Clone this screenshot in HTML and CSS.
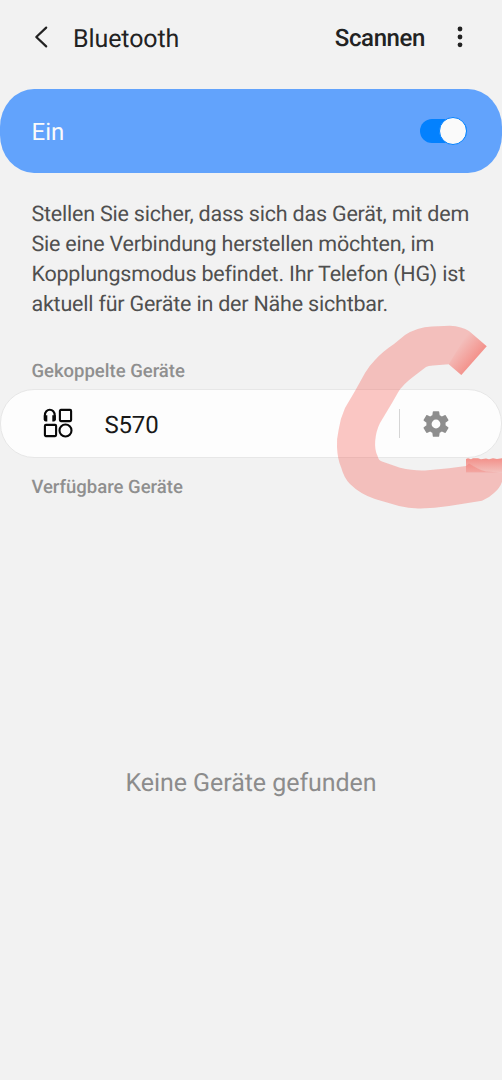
FILE: index.html
```html
<!DOCTYPE html>
<html lang="de">
<head>
<meta charset="utf-8">
<title>Bluetooth</title>
<link rel="stylesheet" href="styles.css">
</head>
<body>
<main class="screen">
  <header class="bar">
    <svg class="back" width="16" height="24" viewBox="0 0 16 24"><path d="M13.2 2.6 3.3 12l9.9 9.4"/></svg>
    <h1 class="title">Bluetooth</h1>
    <span class="scan">Scannen</span>
    <svg class="more" width="8" height="24" viewBox="0 0 8 24"><circle cx="4" cy="4" r="2.4"/><circle cx="4" cy="12" r="2.4"/><circle cx="4" cy="19.8" r="2.4"/></svg>
  </header>
  <section class="power">
    <span class="power-label">Ein</span>
    <span class="switch"><span class="knob"></span></span>
  </section>
  <p class="hint"><span>Stellen Sie sicher, dass sich das Gerät, mit dem</span><br><span>Sie eine Verbindung herstellen möchten, im</span><br><span>Kopplungsmodus befindet. Ihr Telefon (HG) ist</span><br><span>aktuell für Geräte in der Nähe sichtbar.</span></p>
  <h2 class="heading">Gekoppelte Geräte</h2>
  <section class="device">
    <svg class="kind" width="30" height="30" viewBox="0 0 30 30">
      <path d="M1.9 12V7.2a4.9 5.5 0 0 1 9.8 0V12"/>
      <path class="cups" d="M.8 7.3h3.5v6.2H2.7Q.8 13.5.8 11.5zM9.3 7.3h3.5v4.2q0 2-1.9 2H9.3z"/>
      <rect x="16.9" y="1.9" width="11.2" height="11.2" rx="1"/>
      <rect x="1.9" y="16.9" width="11.2" height="11.2" rx="1"/>
      <circle cx="22.5" cy="22.5" r="6"/>
    </svg>
    <span class="name">S570</span>
    <span class="divider"></span>
    <svg class="gear" width="32" height="32" viewBox="0 0 24 24"><path d="M19.14 12.94c.04-.3.06-.61.06-.94 0-.32-.02-.64-.07-.94l2.03-1.58a.49.49 0 0 0 .12-.61l-1.92-3.32a.488.488 0 0 0-.59-.22l-2.39.96c-.5-.38-1.03-.7-1.62-.94l-.36-2.54a.484.484 0 0 0-.48-.41h-3.84c-.24 0-.43.17-.47.41l-.36 2.54c-.59.24-1.13.57-1.62.94l-2.39-.96c-.22-.08-.47 0-.59.22L2.74 8.87c-.12.21-.08.47.12.61l2.03 1.58c-.05.3-.09.63-.09.94s.02.64.07.94l-2.03 1.58a.49.49 0 0 0-.12.61l1.92 3.32c.12.22.37.29.59.22l2.39-.96c.5.38 1.03.7 1.62.94l.36 2.54c.05.24.24.41.48.41h3.84c.24 0 .44-.17.47-.41l.36-2.54c.59-.24 1.13-.56 1.62-.94l2.39.96c.22.08.47 0 .59-.22l1.92-3.32c.12-.22.07-.47-.12-.61zM12 15.3a3.3 3.3 0 1 1 0-6.6 3.3 3.3 0 0 1 0 6.6z"/></svg>
  </section>
  <h2 class="heading available">Verfügbare Geräte</h2>
  <p class="empty">Keine Geräte gefunden</p>
  <svg class="marker" width="170" height="190" viewBox="332 322 170 190">
    <defs>
      <linearGradient id="tip" gradientUnits="userSpaceOnUse" x1="457" y1="347" x2="474" y2="361">
        <stop offset="0" stop-color="#f44336" stop-opacity="0"/><stop offset="1" stop-color="#f44336" stop-opacity=".36"/>
      </linearGradient>
      <linearGradient id="tail" x1="0" y1="0" x2="0" y2="1">
        <stop offset="0" stop-color="#f44336" stop-opacity=".56"/><stop offset="1" stop-color="#f44336" stop-opacity=".28"/>
      </linearGradient>
    </defs>
    <path class="ink" d="M486.7 346.3 469 331Q462 326.5 450 325.8L432 326.4Q417 327 405 335L394 344Q382 352 375 360 369 366 365 373L355 391 345 408Q340 419 338.6 430 336.5 439 337 447 337.5 459 341 467 344 478 350 484 360 494 375 499L399 506Q409 508.5 419 508.4 434 508.5 449 506L482 500.7Q489 498 494 493 500 488 502 481.7V472.5H466V466L449 468.3 425 470.4Q414 471 400 467.7L382 461.5Q378.5 460.5 377.6 456 374.5 450 375.2 441 376 431 380 423L392 403 398 392.5Q402 385 415.5 375L426 367Q428 365.8 433 365.4L448.7 364.3 461.3 375Z"/>
    <path fill="url(#tip)" d="M486.7 346.3 469 331 448.7 364.3 461.3 375Z"/>
    <path fill="url(#tail)" d="M466 459l2-.8 3 1 2-1h5l3 1 5-.8 3 .8 4-1 4 .8 5-.8V472.5H466z"/>
    <path class="shade" d="M466 466 469 463.5Q479 470 486 471.5L500 472.5H466z"/>
  </svg>
</main>
</body>
</html>
```
FILE: styles.css
```css
* { box-sizing: border-box; }
body { margin: 0; background: #f2f2f2; font-family: Roboto, sans-serif; color: #222; text-rendering: geometricPrecision; }
h1, h2, p { margin: 0; font-weight: 400; }
svg { display: block; flex: none; }
.screen { position: relative; width: 502px; height: 1080px; overflow: hidden; }
.bar { display: flex; align-items: center; height: 89px; padding: 0 38px 15px 33px; white-space: nowrap; }
.back { fill: none; stroke: #222; stroke-width: 2.2; stroke-linecap: round; stroke-linejoin: round; }
.title { margin: 4px 0 0 24px; font-size: 25px; letter-spacing: -.1px; }
.scan { margin: 2px 31px 0 auto; font-size: 24px; font-weight: 500; letter-spacing: -.4px; }
.more { fill: #222; }
.power { display: flex; align-items: center; justify-content: space-between; height: 83.5px; padding: 0 35px 0 31.5px; border-radius: 34px / 38px; background: #62a3fc; }
.power-label { color: #fafafa; font-size: 24px; padding-top: 2px; }
.switch { display: flex; justify-content: flex-end; align-items: center; width: 47px; height: 24px; border-radius: 12px; background: #0381fe; }
.knob { flex: none; width: 28.5px; height: 28.5px; border: 1px solid #0381fe; border-radius: 50%; background: #fafafa; }
.hint { height: 157px; padding: 27px 0 0 31.4px; color: #4f4f4f; font-size: 21.5px; letter-spacing: -.21px; line-height: 30px; white-space: nowrap; }
.heading { padding: 29.5px 0 0 31.4px; height: 59.5px; color: #8f8f8f; font-size: 18.5px; line-height: 24px; font-weight: 500; }
.device { display: flex; align-items: center; height: 69px; padding-left: 41.5px; border: 1px solid #e7e7e7; border-radius: 34px; background: #fdfdfd; }
.kind { margin-top: -2px; fill: none; stroke: #080808; stroke-width: 2.1; }
.cups { fill: #080808; stroke: none; }
.name { margin-left: 32px; color: #181818; font-size: 24px; padding-top: 2px; letter-spacing: -.2px; }
.divider { width: 1px; height: 29px; margin-left: auto; background: #d5d5d5; }
.gear { margin: 0 49.5px 0 19.5px; fill: #8e8e8e; }
.available { padding-top: 16.5px; }
.empty { padding-top: 251px; color: #8c8c8c; font-size: 25px; letter-spacing: -.05px; line-height: 30px; text-align: center; }
.marker { position: absolute; left: 332px; top: 322px; }
.ink { fill: #f44336; fill-opacity: .29; }
.shade { fill: #f44336; fill-opacity: .2; }
```
